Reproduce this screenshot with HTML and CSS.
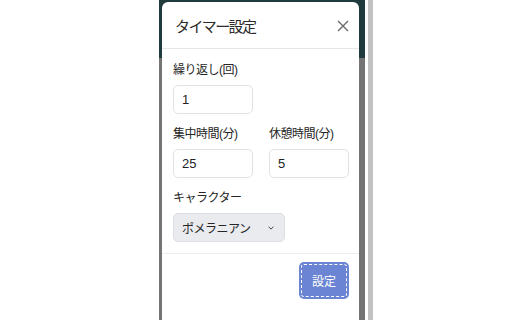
FILE: index.html
```html
<!DOCTYPE html>
<html lang="ja">
<head>
<meta charset="UTF-8">
<title>タイマー設定</title>
<link rel="stylesheet" href="styles.css">
</head>
<body>

<div class="stage">
	<div class="app">
		<div class="app-header"></div>
		<div class="app-body"></div>

		<div class="modal">
			<div class="modal-header">
				<h1>タイマー設定</h1>
				<span class="close">
					<svg width="12" height="12" viewBox="0 0 12 12"><path d="M1 1L11 11M11 1L1 11" stroke="#6b6b6b" stroke-width="1.4" fill="none"/></svg>
				</span>
			</div>
			<div class="modal-body">
				<div class="field">
					<label>繰り返し(回)</label>
					<div class="input">1</div>
				</div>
				<div class="row">
					<div class="field">
						<label>集中時間(分)</label>
						<div class="input">25</div>
					</div>
					<div class="field">
						<label>休憩時間(分)</label>
						<div class="input">5</div>
					</div>
				</div>
				<div class="field">
					<label>キャラクター</label>
					<div class="select">
						<span>ポメラニアン</span>
						<svg width="6" height="4" viewBox="0 0 6 4"><path d="M0.6 0.8L3 3.1L5.4 0.8" stroke="#444" stroke-width="1" fill="none"/></svg>
					</div>
				</div>
			</div>
			<div class="modal-footer">
				<button class="btn">設定</button>
			</div>
		</div>
	</div>
	<div class="scrollbar"></div>
</div>

</body>
</html>
```

FILE: styles.css
```css
* {
	box-sizing: border-box;
	margin: 0;
	padding: 0;
}
html, body {
	background: #fff;
	color: #212529;
	height: 100%;
	overflow: hidden;
}
body {
	font-family: "Liberation Sans", "Noto Sans CJK JP", sans-serif;
}
.stage {
	display: flex;
	height: 320px;
	margin-left: 159px;
}
.app {
	position: relative;
	width: 206px;
	height: 100%;
	display: flex;
	flex-direction: column;
}
.app-header {
	height: 58px;
	background: #1f3b3d;
}
.app-body {
	flex: 1;
	background: #747474;
}
.scrollbar {
	width: 5px;
	margin-left: 3px;
	background: #c2c2c2;
}

.modal {
	position: absolute;
	left: 3px;
	top: 2px;
	width: 197px;
	height: 330px;
	background: #fff;
	border-radius: 6px;
}
.modal-header {
	height: 47px;
	display: flex;
	align-items: center;
	justify-content: space-between;
	padding: 0 10px 0 13px;
	border-bottom: 1px solid #e6e6e6;
}
.modal-header h1 {
	font-size: 15px;
	font-weight: normal;
	color: #2b2b2b;
	letter-spacing: -1.6px;
}
.close {
	display: flex;
	margin-top: 1px;
}

.modal-body {
	padding: 13px 10px 11px 11px;
	display: flex;
	flex-direction: column;
	gap: 12px;
}
.row {
	display: grid;
	grid-template-columns: 80px 80px;
	column-gap: 16px;
}
.field label {
	display: block;
	font-size: 12px;
	line-height: 16px;
	letter-spacing: -0.5px;
	margin-bottom: 7px;
	color: #262626;
}
.input {
	width: 80px;
	height: 29px;
	border: 1px solid #dfe2e6;
	border-radius: 5px;
	padding: 0 8px;
	font-size: 13px;
	line-height: 27px;
	color: #222;
}
.select {
	width: 112px;
	height: 29px;
	background: #e9ebee;
	border: 1px solid #dcdfe3;
	border-radius: 5px;
	padding: 0 10px 0 8px;
	display: flex;
	align-items: center;
	justify-content: space-between;
	font-size: 12px;
	letter-spacing: -0.5px;
	color: #262626;
}

.modal-footer {
	border-top: 1px solid #eeeeee;
	display: flex;
	justify-content: flex-end;
	padding: 8px 10px;
}
.btn {
	width: 50px;
	height: 37px;
	background: #6b84d4;
	color: #fff;
	border: none;
	border-radius: 5px;
	font-family: inherit;
	font-size: 12px;
	outline: 1px dashed #fff;
	outline-offset: -3px;
}
```
